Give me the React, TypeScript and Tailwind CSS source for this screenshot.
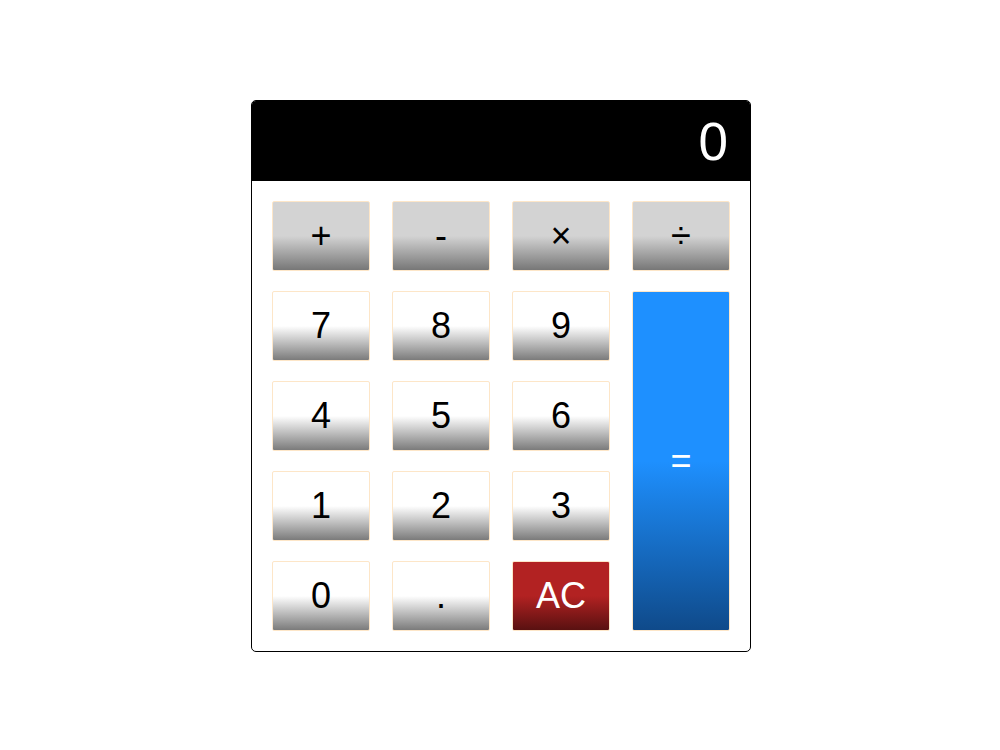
import React, { useState } from "react";

type Key = {
  label: string;
  kind: "op" | "num" | "clear" | "equals";
  span?: string;
};

const keys: Key[] = [
  { label: "+", kind: "op" },
  { label: "-", kind: "op" },
  { label: "×", kind: "op" },
  { label: "÷", kind: "op" },
  { label: "7", kind: "num" },
  { label: "8", kind: "num" },
  { label: "9", kind: "num" },
  { label: "=", kind: "equals", span: "col-start-4 row-start-2 row-span-4" },
  { label: "4", kind: "num" },
  { label: "5", kind: "num" },
  { label: "6", kind: "num" },
  { label: "1", kind: "num" },
  { label: "2", kind: "num" },
  { label: "3", kind: "num" },
  { label: "0", kind: "num" },
  { label: ".", kind: "num" },
  { label: "AC", kind: "clear" },
];

// each key is flat on the top half and fades darker towards the bottom
const styles: Record<Key["kind"], string> = {
  op: "bg-[linear-gradient(#d3d3d3_50%,#777777)] text-black",
  num: "bg-[linear-gradient(#ffffff_50%,#7b7b7b)] text-black",
  clear: "bg-[linear-gradient(#b22222_50%,#591111)] text-white",
  equals: "bg-[linear-gradient(#1e90ff_50%,#0f4a8a)] text-white",
};

const App = () => {
  const [display, setDisplay] = useState("0");

  const press = (k: Key) => {
    if (k.kind === "clear") return setDisplay("0");
    if (k.kind === "num") setDisplay((d) => (d === "0" && k.label !== "." ? k.label : d + k.label));
  };

  return (
    <div className="min-h-screen flex items-center justify-center bg-white pl-[2px] pt-[2px] font-['Liberation_Sans',Arial,sans-serif]">
      <div className="w-[500px] border border-black rounded-[5px] overflow-hidden">
        <div className="h-20 bg-black text-white flex items-center justify-end pr-[22px] text-[53px] leading-none">
          {display}
        </div>
        <div className="p-5 grid grid-cols-4 grid-rows-[repeat(5,70px)] gap-y-5 gap-x-[22px]">
          {keys.map((k) => (
            <button
              key={k.label}
              onClick={() => press(k)}
              className={`${k.span ?? ""} ${styles[k.kind]} border border-[#fde6c8] rounded-[2px] flex items-center justify-center text-4xl leading-none cursor-pointer`}
            >
              {k.label}
            </button>
          ))}
        </div>
      </div>
    </div>
  );
};

export default App;
